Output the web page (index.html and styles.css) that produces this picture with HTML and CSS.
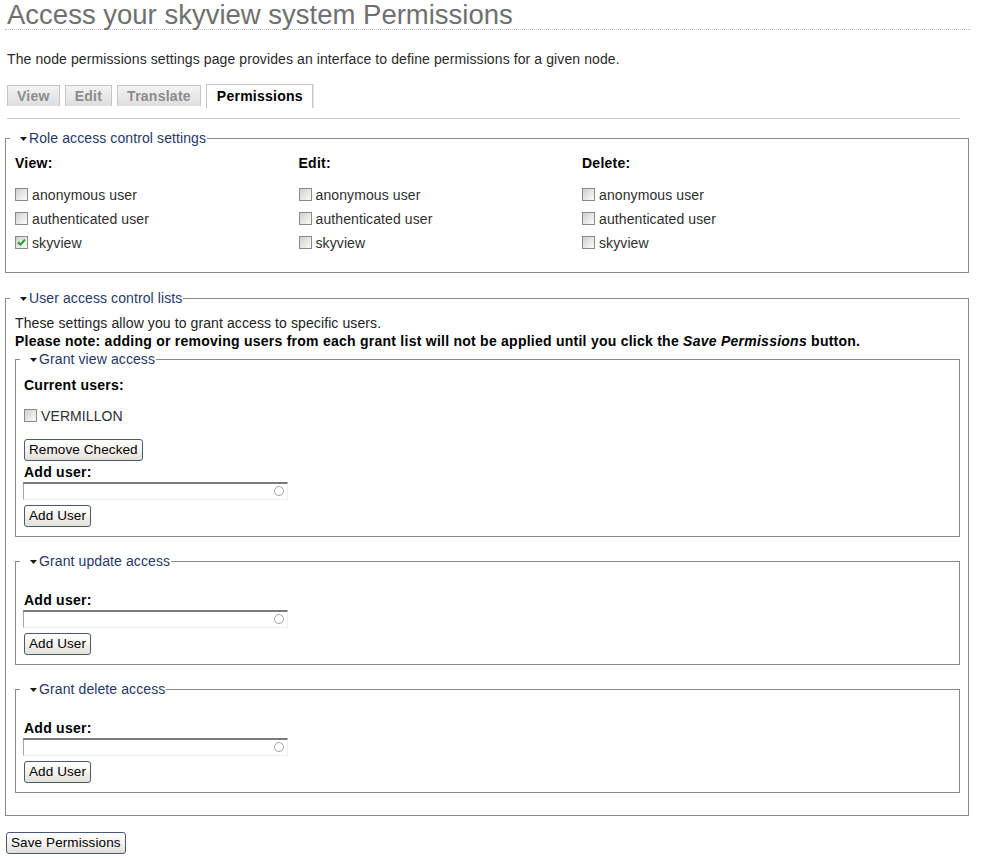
FILE: index.html
```html
<!DOCTYPE html>
<html lang="en">
<head>
<meta charset="utf-8">
<title>Access your skyview system Permissions</title>
<link rel="stylesheet" href="styles.css">
</head>
<body>
<div class="page">
  <h1 class="title">Access your skyview system Permissions</h1>
  <p class="intro">The node permissions settings page provides an interface to define permissions for a given node.</p>
  <ul class="tabs">
    <li class="tab">View</li>
    <li class="tab">Edit</li>
    <li class="tab">Translate</li>
    <li class="tab active">Permissions</li>
  </ul>
  <form class="form">
    <fieldset class="fs">
      <legend class="lg"><svg class="arrow" viewBox="0 0 7 4"><path d="M0 0H7L3.5 4Z" fill="#1a1a1a"/></svg>Role access control settings</legend>
      <div class="fs-body">
        <div class="cols">
          <div class="col">
            <div class="col-title">View:</div>
            <div class="cb-row"><span class="cb"></span>anonymous user</div>
            <div class="cb-row"><span class="cb"></span>authenticated user</div>
            <div class="cb-row"><span class="cb"><svg class="tick" viewBox="0 0 11 11"><path d="M2 5.2L4.4 7.6L9 2.6" fill="none" stroke="#22a022" stroke-width="2"/></svg></span>skyview</div>
          </div>
          <div class="col">
            <div class="col-title">Edit:</div>
            <div class="cb-row"><span class="cb"></span>anonymous user</div>
            <div class="cb-row"><span class="cb"></span>authenticated user</div>
            <div class="cb-row"><span class="cb"></span>skyview</div>
          </div>
          <div class="col">
            <div class="col-title">Delete:</div>
            <div class="cb-row"><span class="cb"></span>anonymous user</div>
            <div class="cb-row"><span class="cb"></span>authenticated user</div>
            <div class="cb-row"><span class="cb"></span>skyview</div>
          </div>
        </div>
      </div>
    </fieldset>

    <fieldset class="fs fs-users">
      <legend class="lg"><svg class="arrow" viewBox="0 0 7 4"><path d="M0 0H7L3.5 4Z" fill="#1a1a1a"/></svg>User access control lists</legend>
      <div class="fs-body fs-body-users">
        <div class="desc">These settings allow you to grant access to specific users.</div>
        <div class="note">Please note: adding or removing users from each grant list will not be applied until you click the <em>Save Permissions</em> button.</div>

        <fieldset class="fs-inner">
          <legend class="lg"><svg class="arrow" viewBox="0 0 7 4"><path d="M0 0H7L3.5 4Z" fill="#1a1a1a"/></svg>Grant view access</legend>
          <div class="inner-body">
            <div class="label">Current users:</div>
            <div class="cb-row user-row"><span class="cb"></span>VERMILLON</div>
            <button type="button" class="btn btn-remove">Remove Checked</button>
            <div class="label label-add">Add user:</div>
            <div class="ac-wrap"><input type="text" class="ac-input"><span class="throbber"></span></div>
            <button type="button" class="btn btn-add">Add User</button>
          </div>
        </fieldset>

        <fieldset class="fs-inner">
          <legend class="lg"><svg class="arrow" viewBox="0 0 7 4"><path d="M0 0H7L3.5 4Z" fill="#1a1a1a"/></svg>Grant update access</legend>
          <div class="inner-body inner-body-tall">
            <div class="label">Add user:</div>
            <div class="ac-wrap"><input type="text" class="ac-input"><span class="throbber"></span></div>
            <button type="button" class="btn btn-add">Add User</button>
          </div>
        </fieldset>

        <fieldset class="fs-inner">
          <legend class="lg"><svg class="arrow" viewBox="0 0 7 4"><path d="M0 0H7L3.5 4Z" fill="#1a1a1a"/></svg>Grant delete access</legend>
          <div class="inner-body inner-body-tall">
            <div class="label">Add user:</div>
            <div class="ac-wrap"><input type="text" class="ac-input"><span class="throbber"></span></div>
            <button type="button" class="btn btn-add">Add User</button>
          </div>
        </fieldset>
      </div>
    </fieldset>

    <button type="button" class="btn btn-save">Save Permissions</button>
  </form>
</div>
</body>
</html>
```

FILE: styles.css
```css
html, body {
  background: #ffffff;
}
body {
  margin: 0;
  font-family: "Liberation Sans", Arial, sans-serif;
  font-size: 14px;
  line-height: 18px;
  letter-spacing: 0.1px;
  color: #222222;
}
.page {
  padding-left: 5px;
  width: 964px;
}
.title {
  margin: 0 -2px 0 0;
  padding-left: 2px;
  font-size: 27.5px;
  line-height: 29px;
  font-weight: normal;
  letter-spacing: 0;
  color: #707070;
  border-bottom: 1px dotted #bdbdbd;
}
.intro {
  margin: 20px 0 0 2px;
  color: #2a2a2a;
}
.tabs {
  display: flex;
  align-items: flex-start;
  gap: 5px;
  list-style: none;
  margin: 16px 9px 0 2px;
  padding: 0 0 10px 0;
  height: 24px;
  border-bottom: 1px solid #cccccc;
}
.tab {
  margin-top: 1px;
  height: 20px;
  line-height: 20px;
  padding: 0 9px;
  border: 1px solid #c6c6c6;
  border-bottom: 0;
  background: linear-gradient(#f3f3f3, #dedede);
  color: #8c8c8c;
  font-weight: bold;
  letter-spacing: 0.25px;
}
.tab.active {
  margin-top: 0;
  height: 23px;
  line-height: 22px;
  background: #ffffff;
  color: #000000;
  padding: 0 9px 0 10px;
  box-shadow: 1px 0 0 #e4e4e4;
}
.form {
  margin: 0;
}
.fs {
  margin: 10px 0 0 0;
  padding: 0;
  border: 1px solid #8a8a84;
  min-width: 0;
}
.fs-users {
  margin-top: 16px;
}
.lg {
  margin-left: 4px;
  padding: 0 1px 0 0;
  line-height: 18px;
  font-size: 14px;
  color: #26376a;
}
.arrow {
  display: inline-block;
  width: 7px;
  height: 4px;
  margin: 0 2px 0 10px;
  vertical-align: 2px;
}
.fs-body {
  padding: 7px 8px 17px 9px;
}
.fs-body-users {
  padding-bottom: 7px;
}
.cols {
  display: flex;
}
.col {
  width: 30%;
}
.col-title {
  font-weight: bold;
  letter-spacing: 0.25px;
  color: #000000;
  margin-bottom: 11px;
}
.cb-row {
  line-height: 24px;
  color: #2e2e2e;
}
.cb {
  display: inline-block;
  position: relative;
  width: 11px;
  height: 11px;
  border: 1px solid #878a8e;
  background: linear-gradient(135deg, #cfd0cc 0%, #e8e8e4 55%, #fbfbfa 100%);
  margin-right: 4px;
  vertical-align: -1px;
}
.tick {
  display: block;
  width: 11px;
  height: 11px;
}
.desc {
  color: #222222;
}
.note {
  font-weight: bold;
  letter-spacing: 0.25px;
  color: #000000;
}
.fs-inner {
  margin: 0 0 15px 0;
  padding: 0;
  border: 1px solid #8a8a84;
  min-width: 0;
}
.inner-body {
  display: flex;
  flex-direction: column;
  align-items: flex-start;
  padding: 8px 8px 9px 8px;
}
.inner-body-tall {
  padding-top: 21px;
}
.label {
  font-weight: bold;
  letter-spacing: 0.25px;
  color: #000000;
}
.user-row {
  margin-top: 10px;
}
.label-add {
  margin-top: 2px;
}
.ac-wrap {
  position: relative;
  margin: 1px 0 0 -1px;
  width: 265px;
  height: 18px;
}
.ac-input {
  display: block;
  box-sizing: border-box;
  width: 265px;
  height: 18px;
  margin: 0;
  padding: 0 2px;
  border: 0;
  border-top: 2px solid #7b7b7b;
  border-left: 1px solid #a3a3a3;
  border-right: 1px solid #ededed;
  border-bottom: 1px solid #f0f0f0;
  background: #ffffff;
  font: 14px "Liberation Sans", Arial, sans-serif;
  outline: none;
}
.throbber {
  position: absolute;
  right: 4px;
  top: 4px;
  width: 8px;
  height: 8px;
  border: 1.5px solid #a4a4a4;
  border-radius: 50%;
}
.btn {
  display: block;
  box-sizing: border-box;
  height: 22px;
  margin: 0;
  padding: 0 4px;
  border: 1px solid #465b7c;
  border-radius: 3px;
  background: linear-gradient(#ffffff 0%, #f4f3ef 50%, #e2dfd6 100%);
  color: #000000;
  font: 13.5px "Liberation Sans", Arial, sans-serif;
  letter-spacing: 0.1px;
  line-height: 20px;
}
.btn-remove {
  margin-top: 11px;
}
.btn-add {
  margin-top: 5px;
}
.btn-save {
  margin: 16px 0 0 1px;
  height: 22px;
}
```
